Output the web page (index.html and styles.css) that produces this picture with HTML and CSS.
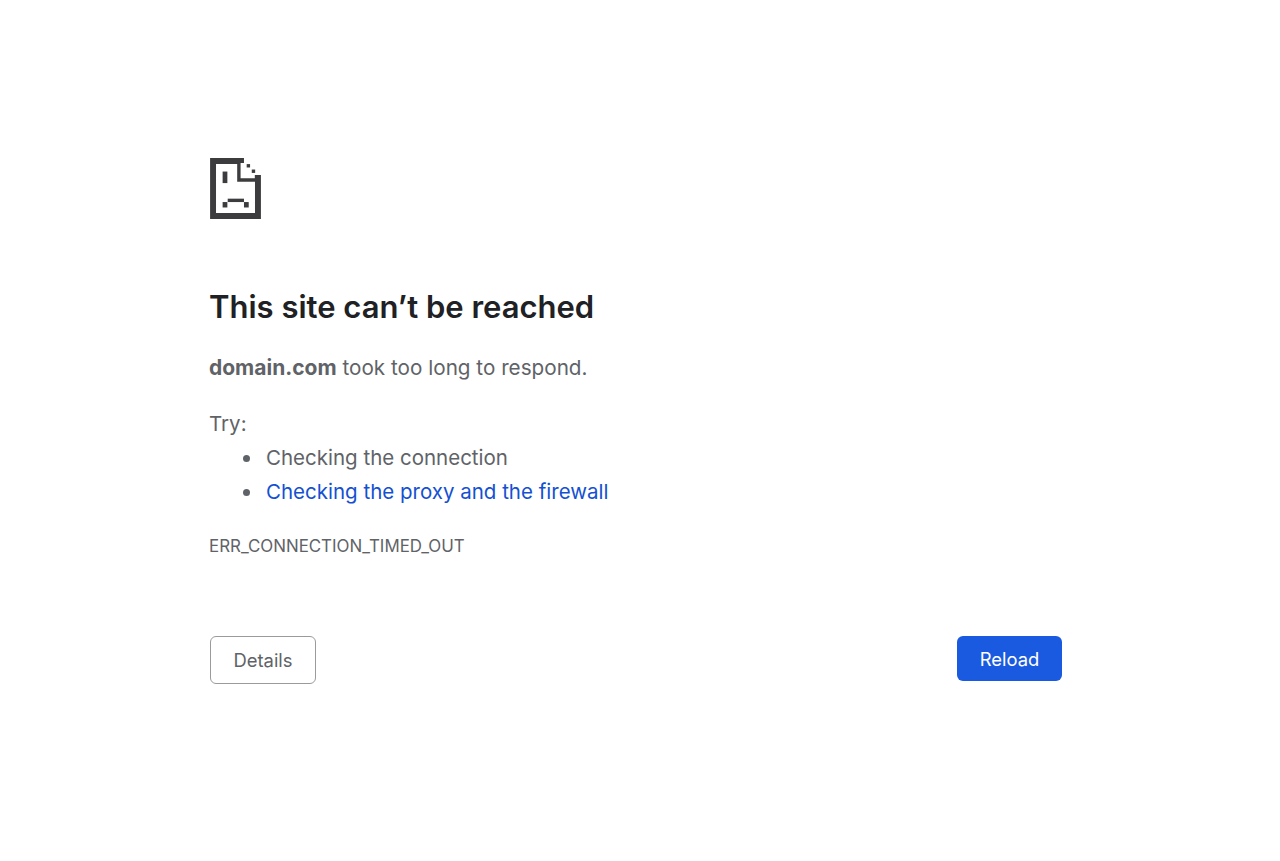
FILE: index.html
```html
<!DOCTYPE html>
<html lang="en">

<head>
    <meta charset="UTF-8">
    <meta name="viewport" content="width=device-width, initial-scale=1.0">
    <title>domain.com</title>
    <link rel="stylesheet" href="styles.css">
</head>

<body>
    <main class="error-page">
        <svg class="error-icon" viewBox="0 0 15 18" width="51" height="61" aria-hidden="true">
            <path d="M0 0H10V1.5H9V6H13.2V5H15V18H0ZM1.75 1.75V16.25H13.25V7H8V1.75Z" fill-rule="evenodd" />
            <rect x="10.8" y="1.8" width="1" height="1" />
            <rect x="12.3" y="3.4" width="1" height="1" />
            <rect x="3.7" y="4" width="1.4" height="3.4" />
            <rect x="5.2" y="12" width="4.8" height="1" />
            <rect x="3.7" y="13" width="1.4" height="1.6" />
            <rect x="10" y="13" width="1.4" height="1.6" />
        </svg>
        <h1>This site can’t be reached</h1>
        <p class="summary"><strong>domain.com</strong> took too long to respond.</p>
        <p class="try">Try:</p>
        <ul class="suggestions">
            <li>Checking the connection</li>
            <li><a href="#">Checking the proxy and the firewall</a></li>
        </ul>
        <div class="error-code">ERR_CONNECTION_TIMED_OUT</div>
        <div class="actions">
            <button type="button" class="button details">Details</button>
            <button type="button" class="button reload">Reload</button>
        </div>
    </main>
</body>

</html>
```
FILE: styles.css
```css
body {
    margin: 0;
    background-color: #fff;
    font-family: Inter, "Liberation Sans", sans-serif;
    color: #5f6368;
}

.error-page {
    width: 852px;
    margin-left: 210px;
    padding-top: 158px;
}

.error-icon {
    display: block;
    fill: #3c3c3e;
}

h1 {
    margin: 69px 0 0 -1px;
    font-size: 31px;
    line-height: 38px;
    font-weight: 600;
    color: #202124;
}

.summary {
    margin: 25px 0 0 -1px;
    font-size: 20.7px;
    line-height: 34px;
}

.summary strong {
    font-weight: 700;
    font-size: 21px;
}

.try {
    margin: 22px 0 0 -1px;
    font-size: 20.5px;
    line-height: 34px;
}

.suggestions {
    margin: 0;
    padding-left: 33px;
    list-style: none;
    font-size: 20.5px;
    line-height: 34px;
}

.suggestions li {
    display: flex;
    align-items: center;
    gap: 16px;
}

.suggestions li::before {
    content: "";
    width: 7px;
    height: 7px;
    border-radius: 50%;
    background: #5f6368;
}

.suggestions a {
    color: #1450d2;
    text-decoration: none;
}

.error-code {
    margin: 25px 0 0 -1px;
    font-size: 16.9px;
    line-height: 24px;
}

.actions {
    display: flex;
    justify-content: space-between;
    align-items: flex-start;
    margin-top: 78px;
}

.button {
    font-family: inherit;
    font-size: 18.4px;
    border-radius: 6px;
    padding: 0;
}

.details {
    width: 106px;
    height: 48px;
    background: #fff;
    border: 1.5px solid #9b9b9b;
    color: #5f6368;
}

.reload {
    width: 105px;
    height: 45px;
    background: #1a5ae0;
    border: none;
    color: #fff;
}
```
